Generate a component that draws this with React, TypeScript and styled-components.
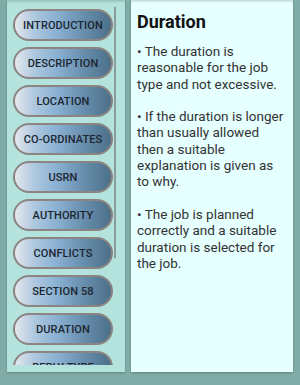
import React from 'react'
import styled, { createGlobalStyle } from 'styled-components'

const GlobalStyle = createGlobalStyle`
  html, body {
    margin: 0;
    padding: 0;
    background: #80aba6;
    font-family: Roboto, 'Liberation Sans', sans-serif;
  }
`

const Screen = styled('div')`
  width: 300px;
  height: 385px;
  display: flex;
  flex-direction: row;
  gap: 6px;
  padding: 0 7px 13px 7px;
  box-sizing: border-box;
  background: #80aba6;
  overflow: hidden;
`

const MenuPanel = styled('div')`
  position: relative;
  width: 118px;
  flex-shrink: 0;
  display: flex;
  flex-direction: column;
  padding: 0 0 7px 6px;
  box-sizing: border-box;
  background: #b3e3dc;
  box-shadow: 0 1px 2px rgba(0, 0, 0, 0.25), inset 0 3px 3px -2px rgba(0, 0, 0, 0.2);
`

const MenuList = styled('div')`
  flex: 1;
  overflow: hidden;
  display: flex;
  flex-direction: column;
  gap: 6px;
  padding-top: 9px;
`

const ScrollThumb = styled('div')`
  position: absolute;
  left: 107px;
  top: 7px;
  width: 2px;
  height: 251px;
  background: #8a9d9a;
`

const MenuButton = styled('button')`
  flex-shrink: 0;
  width: 100px;
  height: 32px;
  border-radius: 16px;
  border: 2px solid #8b8481;
  background: linear-gradient(90deg, #e4e8ee 0%, #aec8de 20%, #8cb2d4 42%, #6a90b0 70%, #4c7088 100%);
  box-sizing: border-box;
  padding: 0;
  font-family: Roboto, 'Liberation Sans', sans-serif;
  font-size: 11px;
  font-weight: 500;
  color: #1c2630;
  text-align: center;
  letter-spacing: 0.1px;
`

const ContentPanel = styled('div')`
  width: 162px;
  height: 372px;
  flex-shrink: 0;
  background: #e6ffff;
  padding: 10px 6px 0 6px;
  box-sizing: border-box;
  box-shadow: 0 1px 2px rgba(0, 0, 0, 0.25), inset 0 3px 3px -2px rgba(0, 0, 0, 0.2);
`

const Heading = styled('h1')`
  margin: 0 0 9px 0;
  font-size: 18px;
  font-weight: 700;
  line-height: 24px;
  color: #111;
`

const Point = styled('p')`
  margin: 0 0 16.3px 0;
  font-size: 13.5px;
  line-height: 16.3px;
  color: #333;
`

const items = [
  'INTRODUCTION',
  'DESCRIPTION',
  'LOCATION',
  'CO-ORDINATES',
  'USRN',
  'AUTHORITY',
  'CONFLICTS',
  'SECTION 58',
  'DURATION',
  'REPLY TYPE',
]

const points = [
  'The duration is reasonable for the job type and not excessive.',
  'If the duration is longer than usually allowed then a suitable explanation is given as to why.',
  'The job is planned correctly and a suitable duration is selected for the job.',
]

function App() {
  return (
    <>
      <GlobalStyle />
      <Screen>
        <MenuPanel>
          <MenuList>
            {items.map((item) => (
              <MenuButton key={item}>{item}</MenuButton>
            ))}
          </MenuList>
          <ScrollThumb />
        </MenuPanel>
        <ContentPanel>
          <Heading>Duration</Heading>
          {points.map((p) => (
            <Point key={p}>• {p}</Point>
          ))}
        </ContentPanel>
      </Screen>
    </>
  )
}

export default App
